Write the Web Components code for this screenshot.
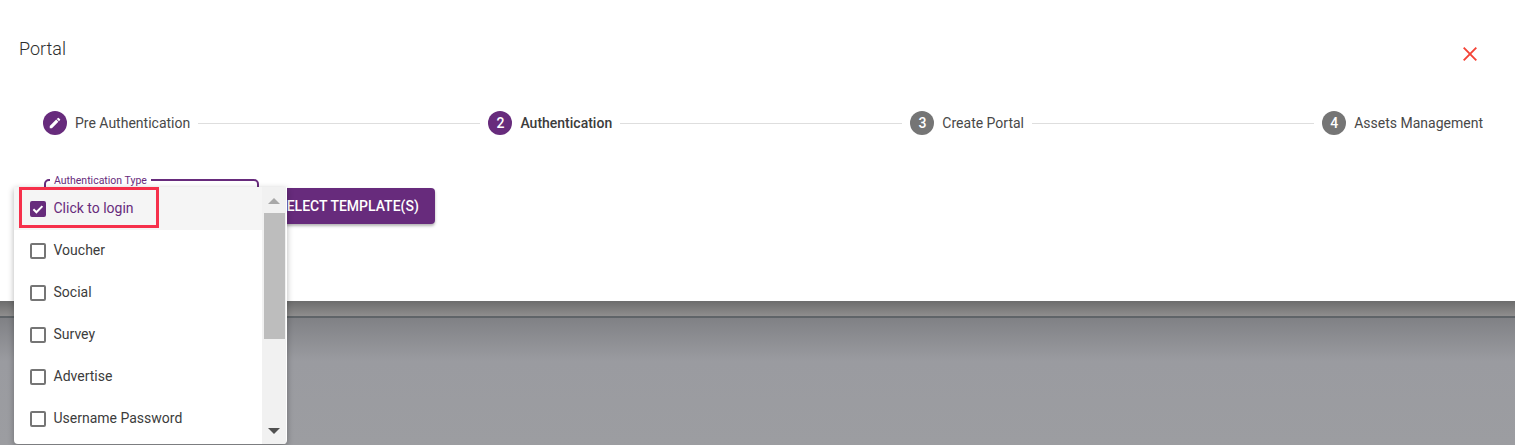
<!DOCTYPE html>
<html lang="en">
<head>
<meta charset="utf-8">
<title>Portal</title>
<style>
  html, body { margin: 0; height: 100%; overflow: hidden; }
  body { display: flex; flex-direction: column; font-family: Roboto, "Liberation Sans", sans-serif; color: #3c3c3c; --purple: #672b7c; }
</style>
</head>
<body>
<portal-dialog heading="Portal">
  <step-bar>
    <step-item state="done">Pre Authentication</step-item>
    <step-item state="active" number="2">Authentication</step-item>
    <step-item number="3">Create Portal</step-item>
    <step-item number="4">Assets Management</step-item>
  </step-bar>
  <auth-form label="Authentication Type" action="Select Template(s)">
    <option-item checked outlined>Click to login</option-item>
    <option-item>Voucher</option-item>
    <option-item>Social</option-item>
    <option-item>Survey</option-item>
    <option-item>Advertise</option-item>
    <option-item>Username Password</option-item>
  </auth-form>
</portal-dialog>
<page-backdrop></page-backdrop>

<script>
(function () {
  class PortalDialog extends HTMLElement {
    constructor() {
      super();
      this.attachShadow({ mode: 'open' });
      this.shadowRoot.innerHTML = `
        <style>
          :host { display: block; height: 301px; background: #fff; flex: none; position: relative; z-index: 1; }
          header { display: flex; justify-content: space-between; align-items: flex-start; padding: 38px 38px 0 19px; height: 73px; box-sizing: border-box; }
          h2 { margin: 0; font-size: 18px; font-weight: 300; line-height: 21px; color: #2e2e2e; }
          svg { display: block; margin-top: 9px; }
        </style>
        <header>
          <h2></h2>
          <svg width="14" height="14" viewBox="0 0 14 14" fill="none" stroke="#f44336" stroke-width="1.9"><path d="M.7.7l12.6 12.6M13.3.7L.7 13.3"/></svg>
        </header>
        <slot></slot>`;
      this.shadowRoot.querySelector('h2').textContent = this.getAttribute('heading');
    }
  }

  class StepBar extends HTMLElement {
    constructor() {
      super();
      this.attachShadow({ mode: 'open' });
      this.shadowRoot.innerHTML = `
        <style>
          :host { display: flex; align-items: center; height: 100px; padding: 0 32px 0 43px; box-sizing: border-box; }
        </style>
        <slot></slot>`;
    }
  }

  class StepItem extends HTMLElement {
    constructor() {
      super();
      const state = this.getAttribute('state');
      const number = this.getAttribute('number');
      const icon = state === 'done'
        ? '<svg width="14" height="14" viewBox="0 0 24 24" fill="#fff"><path d="M3 17.25V21h3.75L17.81 9.94l-3.75-3.75L3 17.25zM20.71 7.04a1 1 0 0 0 0-1.41l-2.34-2.34a1 1 0 0 0-1.41 0l-1.83 1.83 3.75 3.75 1.83-1.83z"/></svg>'
        : number;
      this.attachShadow({ mode: 'open' });
      this.shadowRoot.innerHTML = `
        <style>
          :host { display: flex; align-items: center; font-size: 14px; color: #484848; }
          :host(:not(:first-child)) { flex: 1 1 auto; }
          .line { flex: 1; height: 1px; background: #dedede; margin: 0 8px; }
          :host(:first-child) .line { display: none; }
          .dot { width: 24px; height: 24px; border-radius: 50%; background: #757575; color: #fff; display: flex; align-items: center; justify-content: center; font-size: 14px; font-weight: 500; margin-right: 8px; flex: none; }
          :host([state]) .dot { background: var(--purple); }
          :host([state="active"]) { font-weight: 500; color: #3c3c3c; }
        </style>
        <span class="line"></span>
        <span class="dot">${icon}</span>
        <slot></slot>`;
    }
  }

  class AuthForm extends HTMLElement {
    constructor() {
      super();
      this.attachShadow({ mode: 'open' });
      this.shadowRoot.innerHTML = `
        <style>
          :host { display: flex; align-items: flex-start; gap: 3px; padding: 1px 0 0 44px; position: relative; }
          fieldset { width: 215px; height: 50px; box-sizing: border-box; margin: 0; padding: 0 4px; border: 2px solid var(--purple); border-radius: 5px; }
          legend { padding: 0 4px; font-size: 10.5px; line-height: 12px; color: var(--purple); }
          legend span { position: relative; top: 1px; }
          button { height: 36px; margin-top: 14px; width: 173px; padding: 0 16px; border: 0; border-radius: 4px; background: var(--purple); color: #fff; font: 500 14px Roboto, sans-serif; text-transform: uppercase; white-space: nowrap; box-shadow: 0 2px 3px rgba(0,0,0,.3); }
          .panel { position: absolute; left: 14px; top: 14px; width: 273px; height: 257px; display: flex; background: #fff; border-radius: 0 0 4px 4px; box-shadow: 0 2px 6px rgba(0,0,0,.3); overflow: hidden; }
          .list { flex: 1; display: flex; flex-direction: column; }
          .bar { width: 24px; margin-right: 1px; background: #f1f1f1; display: flex; flex-direction: column; align-items: center; position: relative; }
          .up, .down { width: 0; height: 0; border: 6px solid transparent; position: absolute; left: 6px; }
          .up { top: 11px; border-top: 0; border-bottom-color: #a8a8a8; }
          .down { bottom: 10px; border-bottom: 0; border-top-color: #505050; }
          .thumb { position: absolute; top: 26px; left: 2px; width: 21px; height: 126px; background: #bdbdbd; }
        </style>
        <fieldset><legend><span></span></legend></fieldset>
        <button type="button"></button>
        <div class="panel">
          <div class="list"><slot></slot></div>
          <div class="bar"><i class="up"></i><i class="thumb"></i><i class="down"></i></div>
        </div>`;
      this.shadowRoot.querySelector('legend span').textContent = this.getAttribute('label');
      this.shadowRoot.querySelector('button').textContent = this.getAttribute('action');
    }
  }

  class OptionItem extends HTMLElement {
    constructor() {
      super();
      this.attachShadow({ mode: 'open' });
      this.shadowRoot.innerHTML = `
        <style>
          :host { display: flex; align-items: center; height: 42px; flex: none; padding-left: 16px; font-size: 14px; color: #3c3c3c; position: relative; }
          :host([checked]) { height: 43px; padding-top: 1px; box-sizing: border-box; background: #f5f5f5; color: var(--purple); }
          .box { width: 16px; height: 16px; box-sizing: border-box; border: 2px solid #757575; border-radius: 2px; margin-right: 8px; flex: none; }
          .box svg { display: none; }
          :host([checked]) .box { background: var(--purple); border-color: var(--purple); }
          :host([checked]) .box svg { display: block; margin: -2px; }
          .label { padding-bottom: 2px; margin-left: -.5px; }
          .mark { display: none; position: absolute; left: 5px; top: 0; width: 140px; height: 41px; box-sizing: border-box; border: 3px solid #f6304b; }
          :host([outlined]) .mark { display: block; }
        </style>
        <span class="box"><svg width="16" height="16" viewBox="0 0 16 16" fill="none" stroke="#fff" stroke-width="2"><path d="M3.4 8.3l3 3 6-6.2"/></svg></span>
        <span class="label"><slot></slot></span>
        <span class="mark"></span>`;
    }
  }

  class PageBackdrop extends HTMLElement {
    constructor() {
      super();
      this.attachShadow({ mode: 'open' });
      this.shadowRoot.innerHTML = `
        <style>
          :host { display: block; flex: 1; background: linear-gradient(#808185 17px, #9a9ba0 60px, #9c9da1); }
          .strip { height: 15px; background: linear-gradient(#6c6c6c, #8f8e8e); }
          .rule { height: 2px; background: #5f6468; }
        </style>
        <div class="strip"></div>
        <div class="rule"></div>`;
    }
  }

  customElements.define('portal-dialog', PortalDialog);
  customElements.define('step-bar', StepBar);
  customElements.define('step-item', StepItem);
  customElements.define('auth-form', AuthForm);
  customElements.define('option-item', OptionItem);
  customElements.define('page-backdrop', PageBackdrop);
})();
</script>
</body>
</html>
